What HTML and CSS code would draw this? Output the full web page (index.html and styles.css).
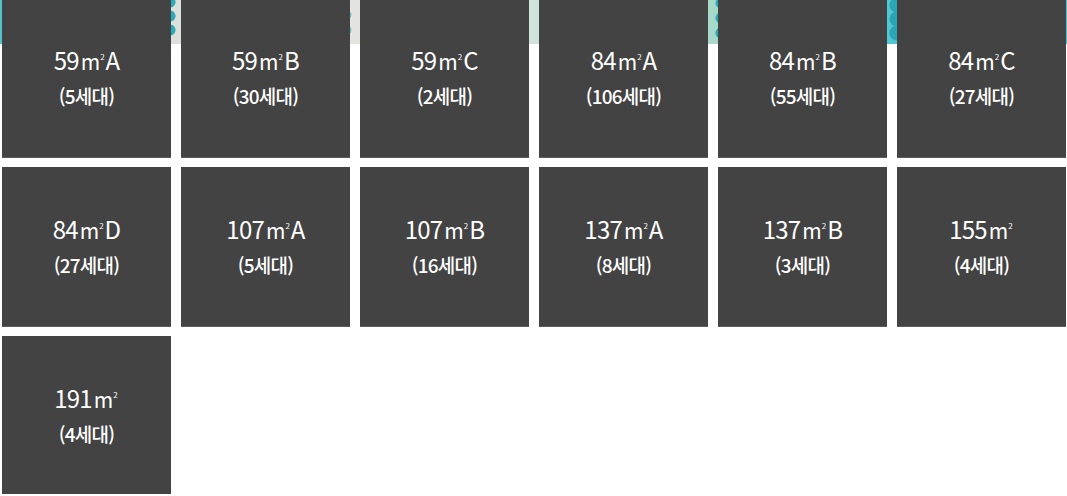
FILE: index.html
```html
<!DOCTYPE html>
<html lang="ko">
<head>
<meta charset="utf-8">
<title>타입</title>
<link rel="stylesheet" href="styles.css">
</head>
<body>
<div class="wrap">
  <ul class="types">
    <li class="tile"><span class="size">59<span class="unit">m<sup>2</sup></span>A</span><span class="units">(5세대)</span></li>
    <li class="tile"><span class="size">59<span class="unit">m<sup>2</sup></span>B</span><span class="units">(30세대)</span></li>
    <li class="tile"><span class="size">59<span class="unit">m<sup>2</sup></span>C</span><span class="units">(2세대)</span></li>
    <li class="tile"><span class="size">84<span class="unit">m<sup>2</sup></span>A</span><span class="units">(106세대)</span></li>
    <li class="tile"><span class="size">84<span class="unit">m<sup>2</sup></span>B</span><span class="units">(55세대)</span></li>
    <li class="tile"><span class="size">84<span class="unit">m<sup>2</sup></span>C</span><span class="units">(27세대)</span></li>
    <li class="tile"><span class="size">84<span class="unit">m<sup>2</sup></span>D</span><span class="units">(27세대)</span></li>
    <li class="tile"><span class="size">107<span class="unit">m<sup>2</sup></span>A</span><span class="units">(5세대)</span></li>
    <li class="tile"><span class="size">107<span class="unit">m<sup>2</sup></span>B</span><span class="units">(16세대)</span></li>
    <li class="tile"><span class="size">137<span class="unit">m<sup>2</sup></span>A</span><span class="units">(8세대)</span></li>
    <li class="tile"><span class="size">137<span class="unit">m<sup>2</sup></span>B</span><span class="units">(3세대)</span></li>
    <li class="tile"><span class="size">155<span class="unit">m<sup>2</sup></span></span><span class="units">(4세대)</span></li>
    <li class="tile"><span class="size">191<span class="unit">m<sup>2</sup></span></span><span class="units">(4세대)</span></li>
  </ul>
</div>
</body>
</html>
```
FILE: styles.css
```css
html, body {
  margin: 0;
  padding: 0;
  background: #ffffff;
  overflow: hidden;
}
body {
  font-family: "Noto Sans CJK KR", "Noto Sans", sans-serif;
  color: #ffffff;
}
.wrap {
  width: 1067px;
  height: 496px;
  background-color: #ffffff;
  background-image:
    radial-gradient(circle at 170px 4px, #2aa9b9 5px, transparent 6px),
    radial-gradient(circle at 170px 18px, #2aa9b9 5px, transparent 6px),
    radial-gradient(circle at 170px 32px, #2aa9b9 5px, transparent 6px),
    radial-gradient(circle at 347px 17px, #7cc6c8 4px, transparent 5px),
    radial-gradient(circle at 347px 32px, #7cc6c8 4px, transparent 5px),
    radial-gradient(circle at 721px 5px, #2aa9b9 5px, transparent 6px),
    radial-gradient(circle at 721px 20px, #2aa9b9 5px, transparent 6px),
    radial-gradient(circle at 721px 35px, #2aa9b9 5px, transparent 6px),
    radial-gradient(circle at 897px 7px, #2aa5b5 7px, transparent 8px),
    radial-gradient(circle at 897px 21px, #2aa5b5 7px, transparent 8px),
    radial-gradient(circle at 897px 35px, #2aa5b5 7px, transparent 8px),
    linear-gradient(to right, #55c4cc 0px, #58c5cc 2px, #dcdfdb 172px, #e3e4e0 355px, #d0e2da 540px, #a6d9c9 715px, #4fc7d3 892px, #4cc6d2 1067px);
  background-repeat: no-repeat;
  background-size: 100% 46px;
}
.types {
  list-style: none;
  margin: -2px 0 0 0;
  padding: 0 0 0 2px;
  display: grid;
  grid-template-columns: repeat(6, 169px);
  grid-auto-rows: 160px;
  gap: 9px 10px;
}
.tile {
  background: #434343;
  border-bottom: 1px solid #5c5c5c;
  display: flex;
  flex-direction: column;
  align-items: center;
  justify-content: center;
  padding-top: 1px;
}
.size {
  font-size: 24px;
  line-height: 34px;
  letter-spacing: -0.8px;
  white-space: nowrap;
}
.unit {
  font-size: 21px;
  margin: 0 1px 0 2px;
  letter-spacing: 0;
}
.unit sup {
  font-size: 8px;
  vertical-align: top;
  position: relative;
  top: -3px;
  margin-left: 0;
}
.units {
  font-size: 19px;
  line-height: 36px;
  font-weight: 500;
  letter-spacing: -0.8px;
}
```
